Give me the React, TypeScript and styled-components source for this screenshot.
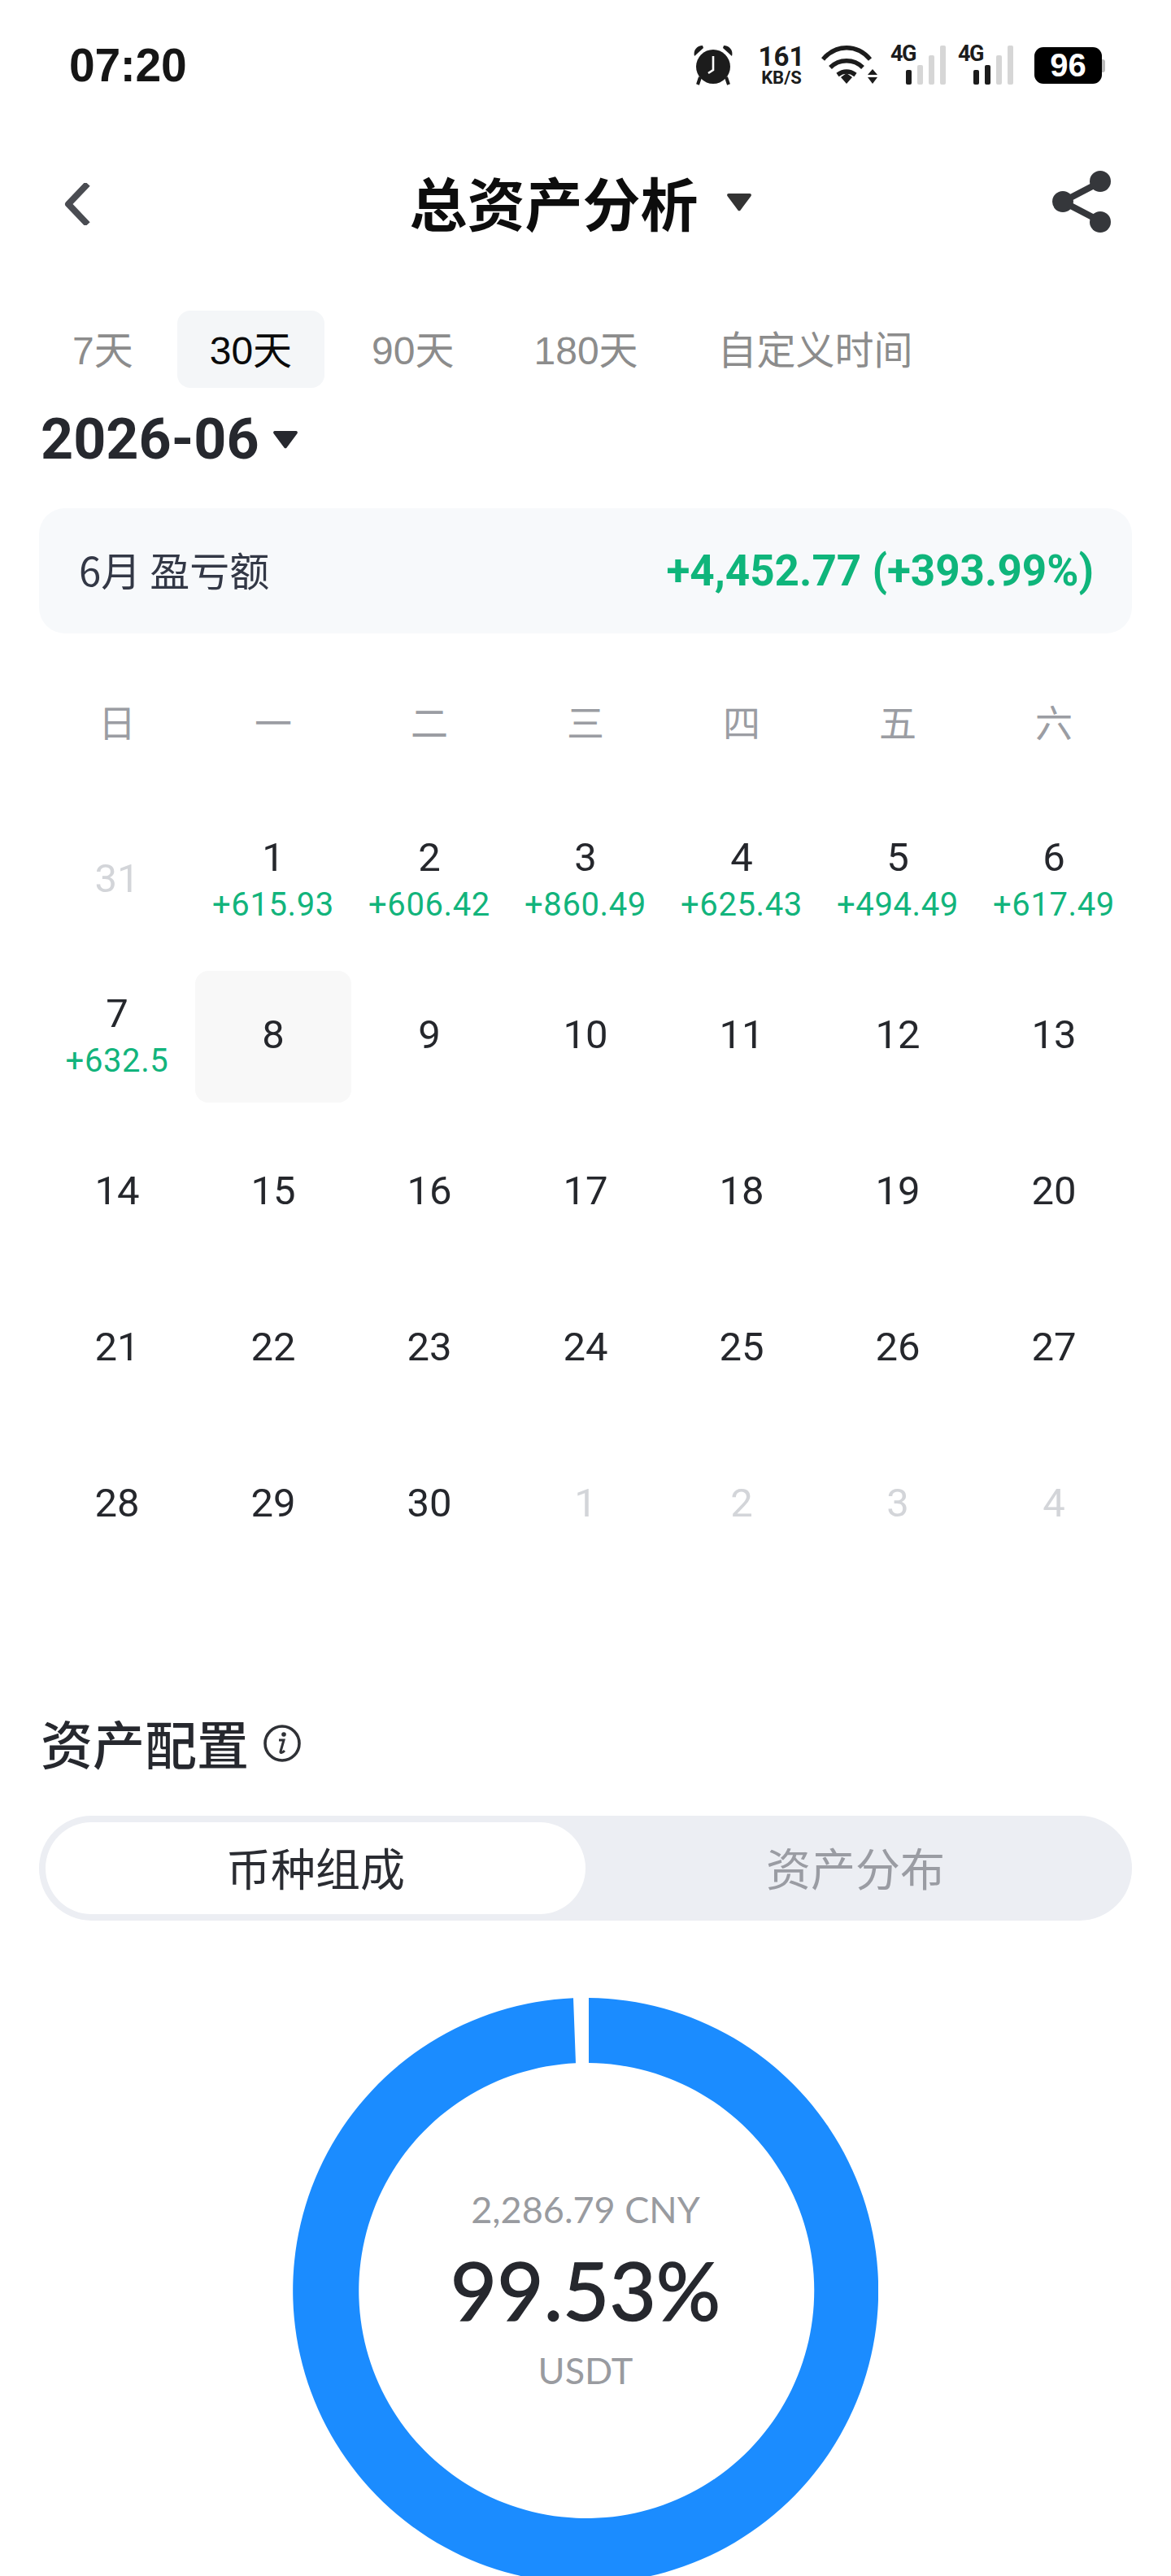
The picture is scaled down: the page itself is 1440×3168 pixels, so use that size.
import React from "react";
import styled, { createGlobalStyle } from "styled-components";

const CJK = `"Noto Sans CJK SC", sans-serif`;
const HELV = `"Liberation Sans", "Noto Sans CJK SC", sans-serif`;
const NUM = `Roboto, "Noto Sans CJK SC", sans-serif`;

const GlobalStyle = createGlobalStyle`
  html, body { margin: 0; padding: 0; background: #fff; }
  * { box-sizing: border-box; }
`;

const Page = styled.div`
  width: 1440px;
  height: 3168px;
  overflow: hidden;
  background: #fff;
  font-family: ${CJK};
`;

const StatusBar = styled.div`
  height: 160px;
  padding: 0 85px;
  display: flex;
  align-items: center;
  justify-content: space-between;
`;

const Time = styled.div`
  font: bold 57px/1 ${HELV};
  color: #161616;
  letter-spacing: -0.3px;
`;

const StatusIcons = styled.div`
  display: flex;
  align-items: center;
`;

const Speed = styled.div`
  width: 58px;
  margin: 0 20px 0 30px;
  display: flex;
  flex-direction: column;
  align-items: center;
  color: #1c1c1c;
  font-family: ${NUM};
  font-weight: 700;
`;

const SpeedValue = styled.span`
  font-size: 33px;
  line-height: 30px;
`;

const SpeedUnit = styled.span`
  font-size: 22px;
  line-height: 21px;
`;

const Signal = styled.div`
  position: relative;
  width: 66px;
  height: 48px;
  margin-left: 17px;
  display: flex;
  align-items: flex-end;
  justify-content: flex-end;
  gap: 7px;
`;

const SignalLabel = styled.span`
  position: absolute;
  left: -2px;
  top: -4px;
  font: 700 27px/28px ${NUM};
  letter-spacing: -1.5px;
  color: #1c1c1c;
`;

const SignalBar = styled.i<{ $h: number; $on: boolean }>`
  display: block;
  width: 7px;
  height: ${(p) => p.$h}px;
  border-radius: 2px;
  background: ${(p) => (p.$on ? "#1c1c1c" : "#d6d6d6")};
`;

const Battery = styled.div`
  position: relative;
  width: 83px;
  height: 45px;
  margin-left: 26px;
  border-radius: 11px;
  background: #000;
  color: #fff;
  font: 700 40px/45px ${HELV};
  text-align: center;
  &::after {
    content: "";
    position: absolute;
    right: -4px;
    top: 15px;
    width: 4px;
    height: 16px;
    border-radius: 0 3px 3px 0;
    background: #bcbcbc;
  }
`;

const Header = styled.div`
  height: 176px;
  padding: 0 73px 0 77px;
  display: grid;
  grid-template-columns: 1fr auto 1fr;
  align-items: center;
`;

const HeaderLeft = styled.div`
  display: flex;
  padding-top: 6px;
`;

const HeaderRight = styled.div`
  display: flex;
  justify-content: flex-end;
`;

const TitleGroup = styled.div`
  margin-right: 16px;
  display: flex;
  align-items: center;
  gap: 34px;
`;

const Title = styled.h1`
  margin: 0 0 2px;
  font: 700 71px/1 ${CJK};
  color: #0d0d0d;
`;

const Tabs = styled.div`
  margin: 46px 0 0 49px;
  display: flex;
  gap: 18px;
`;

const Tab = styled.div<{ $active?: boolean }>`
  height: 95px;
  padding: 4px 40px 0;
  display: flex;
  align-items: center;
  border-radius: 16px;
  font: 400 48px/1 ${HELV};
  color: ${(p) => (p.$active ? "#0a0a0a" : "#8c8c8c")};
  background: ${(p) => (p.$active ? "#f4f6f8" : "transparent")};
  &:first-child {
    padding-right: 36px;
  }
`;

const MonthRow = styled.div`
  height: 124px;
  padding: 2px 0 0 50px;
  display: flex;
  align-items: center;
  gap: 16px;
`;

const Month = styled.div`
  font: 700 70px/1 ${NUM};
  color: #26282e;
`;

const SummaryPanel = styled.div`
  height: 154px;
  margin: 24px 48px 0;
  padding: 0 47px 0 49px;
  display: flex;
  align-items: center;
  justify-content: space-between;
  border-radius: 32px;
  background: #f7f9fb;
`;

const SummaryLabel = styled.span`
  margin-bottom: 6px;
  font: 400 49px/1 ${CJK};
  color: #333846;
`;

const SummaryValue = styled.span`
  font: 700 53px/1 ${NUM};
  color: #0fb57b;
`;

const Weekdays = styled.div`
  height: 80px;
  margin: 67px 48px 0;
  display: grid;
  grid-template-columns: repeat(7, 192px);
  align-items: center;
  justify-items: center;
  font: 400 46px/1 ${CJK};
  color: #9b9da3;
`;

const DayGrid = styled.div`
  margin: 76px 48px 0;
  display: grid;
  grid-template-columns: repeat(7, 192px);
  grid-auto-rows: 162px;
  row-gap: 30px;
`;

const DayCell = styled.div<{ $today?: boolean }>`
  display: flex;
  flex-direction: column;
  align-items: center;
  justify-content: center;
  padding-bottom: 4px;
  border-radius: 16px;
  background: ${(p) => (p.$today ? "#f8f8f8" : "transparent")};
`;

const DayNumber = styled.span<{ $muted?: boolean }>`
  font: 400 49px/56px ${NUM};
  color: ${(p) => (p.$muted ? "#d3d5d9" : "#25272c")};
`;

const DayProfit = styled.span`
  margin-top: 8px;
  font: 400 40px/44px ${NUM};
  letter-spacing: 0.6px;
  color: #12b47c;
`;

const SectionHead = styled.div`
  height: 80px;
  margin: 170px 0 0 50px;
  display: flex;
  align-items: center;
  gap: 17px;
`;

const SectionTitle = styled.h2`
  margin: 0;
  font: 500 64px/1 ${CJK};
  color: #26282e;
`;

const InfoWrap = styled.div`
  display: flex;
  padding-top: 4px;
`;

const Toggle = styled.div`
  height: 129px;
  margin: 51px 48px 0;
  padding: 8px;
  display: grid;
  grid-template-columns: 1fr 1fr;
  border-radius: 65px;
  background: #eceef3;
`;

const ToggleOption = styled.div<{ $active?: boolean }>`
  display: flex;
  align-items: center;
  justify-content: center;
  padding-bottom: 4px;
  border-radius: 57px;
  font: 400 55px/1 ${CJK};
  color: ${(p) => (p.$active ? "#2a2c32" : "#9a9ca3")};
  background: ${(p) => (p.$active ? "#fff" : "transparent")};
`;

const Donut = styled.div`
  position: relative;
  width: 720px;
  height: 720px;
  margin: 95px auto 0;
`;

const DonutCenter = styled.div`
  position: absolute;
  inset: 0;
  display: flex;
  flex-direction: column;
  align-items: center;
  justify-content: center;
  padding-bottom: 3px;
  font-family: Lato, sans-serif;
`;

const DonutCaption = styled.span`
  font-size: 45px;
  line-height: 56px;
  color: #999ba0;
`;

const DonutValue = styled.span`
  margin: 11px 0;
  font-size: 99px;
  line-height: 120px;
  font-weight: 400;
  -webkit-text-stroke: 1.4px #26282e;
  color: #26282e;
`;

const Caret = ({ size, color }: { size: number; color: string }) => (
  <svg width={size} height={size * 0.75} viewBox="0 0 32 24">
    <path d="M3 2h26c1.6 0 2.4 1.6 1.6 3L17.6 22.4c-.8 1.2-2.4 1.2-3.2 0L1.4 5C.6 3.6 1.4 2 3 2z" fill={color} />
  </svg>
);

const BackIcon = () => (
  <svg width="34" height="52" viewBox="0 0 34 52">
    <path d="M28 4 7 26l21 22" fill="none" stroke="#4a4c52" strokeWidth="8" strokeLinejoin="round" strokeLinecap="square" />
  </svg>
);

const ShareIcon = () => (
  <svg width="74" height="78" viewBox="0 0 74 78">
    <path d="M60 15 14 39l46 24" fill="none" stroke="#35373b" strokeWidth="8" />
    <circle cx="60" cy="14" r="13" fill="#35373b" />
    <circle cx="14" cy="39" r="13" fill="#35373b" />
    <circle cx="60" cy="64" r="13" fill="#35373b" />
  </svg>
);

const AlarmIcon = () => (
  <svg width="50" height="50" viewBox="0 0 50 50">
    <path d="M9 40 6 49M41 40l3 9" stroke="#1c1c1c" strokeWidth="4" />
    <ellipse cx="25" cy="27" rx="21" ry="21" fill="#1c1c1c" />
    <path d="M2 14C0 7 5 1 12 1l1 3z" fill="#1c1c1c" />
    <path d="M48 14c2-7-3-13-10-13l-1 3z" fill="#1c1c1c" />
    <path d="M25 14v17l-6 4" fill="none" stroke="#fff" strokeWidth="2.6" />
  </svg>
);

const WifiIcon = () => (
  <svg width="70" height="50" viewBox="0 0 70 50">
    <g fill="none" stroke="#1c1c1c" strokeWidth="5.4">
      <path d="M2 18C18 -1 44 -1 60 18" />
      <path d="M11 28c11-11 29-11 40 0" />
      <path d="M20 37c7-5 15-5 22 0" />
    </g>
    <path d="M24 40l7-5 7 5-7 8z" fill="#1c1c1c" />
    <path d="M63 30l6 7H57zM57 40h12l-6 8z" fill="#1c1c1c" />
  </svg>
);

const InfoIcon = () => (
  <svg width="48" height="48" viewBox="0 0 48 48">
    <circle cx="24" cy="24" r="21" fill="none" stroke="#2f3136" strokeWidth="3.6" />
    <circle cx="26" cy="13" r="2.8" fill="#2f3136" />
    <path d="M20 20h6l-4 14c-.5 2 1.5 2.5 5-1" fill="none" stroke="#2f3136" strokeWidth="3" />
  </svg>
);

const Ring = () => (
  <svg width="720" height="720" viewBox="0 0 720 720">
    <path
      d="M364 0A360 360 0 1 1 345 .3L348 80.3A280 280 0 1 0 364 80Z"
      fill="#1b8cff"
    />
  </svg>
);

const SignalIcon = ({ on }: { on: number }) => (
  <Signal>
    <SignalLabel>4G</SignalLabel>
    {[18, 24, 36, 48].map((h, i) => (
      <SignalBar key={i} $h={h} $on={i < on} />
    ))}
  </Signal>
);

type Day = { day: number; profit?: string; muted?: boolean; today?: boolean };

const days: Day[] = [
  { day: 31, muted: true },
  { day: 1, profit: "+615.93" },
  { day: 2, profit: "+606.42" },
  { day: 3, profit: "+860.49" },
  { day: 4, profit: "+625.43" },
  { day: 5, profit: "+494.49" },
  { day: 6, profit: "+617.49" },
  { day: 7, profit: "+632.5" },
  { day: 8, today: true },
  ...Array.from({ length: 22 }, (_, i) => ({ day: i + 9 })),
  ...[1, 2, 3, 4].map((day) => ({ day, muted: true })),
];

export default function App() {
  return (
    <Page>
      <GlobalStyle />
      <StatusBar>
        <Time>07:20</Time>
        <StatusIcons>
          <AlarmIcon />
          <Speed>
            <SpeedValue>161</SpeedValue>
            <SpeedUnit>KB/S</SpeedUnit>
          </Speed>
          <WifiIcon />
          <SignalIcon on={1} />
          <SignalIcon on={2} />
          <Battery>96</Battery>
        </StatusIcons>
      </StatusBar>

      <Header>
        <HeaderLeft>
          <BackIcon />
        </HeaderLeft>
        <TitleGroup>
          <Title>总资产分析</Title>
          <Caret size={32} color="#333" />
        </TitleGroup>
        <HeaderRight>
          <ShareIcon />
        </HeaderRight>
      </Header>

      <Tabs>
        <Tab>7天</Tab>
        <Tab $active>30天</Tab>
        <Tab>90天</Tab>
        <Tab>180天</Tab>
        <Tab>自定义时间</Tab>
      </Tabs>

      <MonthRow>
        <Month>2026-06</Month>
        <Caret size={32} color="#26282e" />
      </MonthRow>

      <SummaryPanel>
        <SummaryLabel>6月 盈亏额</SummaryLabel>
        <SummaryValue>+4,452.77 (+393.99%)</SummaryValue>
      </SummaryPanel>

      <Weekdays>
        {["日", "一", "二", "三", "四", "五", "六"].map((d) => (
          <span key={d}>{d}</span>
        ))}
      </Weekdays>

      <DayGrid>
        {days.map((d, i) => (
          <DayCell key={i} $today={d.today}>
            <DayNumber $muted={d.muted}>{d.day}</DayNumber>
            {d.profit && <DayProfit>{d.profit}</DayProfit>}
          </DayCell>
        ))}
      </DayGrid>

      <SectionHead>
        <SectionTitle>资产配置</SectionTitle>
        <InfoWrap>
          <InfoIcon />
        </InfoWrap>
      </SectionHead>

      <Toggle>
        <ToggleOption $active>币种组成</ToggleOption>
        <ToggleOption>资产分布</ToggleOption>
      </Toggle>

      <Donut>
        <Ring />
        <DonutCenter>
          <DonutCaption>2,286.79 CNY</DonutCaption>
          <DonutValue>99.53%</DonutValue>
          <DonutCaption>USDT</DonutCaption>
        </DonutCenter>
      </Donut>
    </Page>
  );
}
